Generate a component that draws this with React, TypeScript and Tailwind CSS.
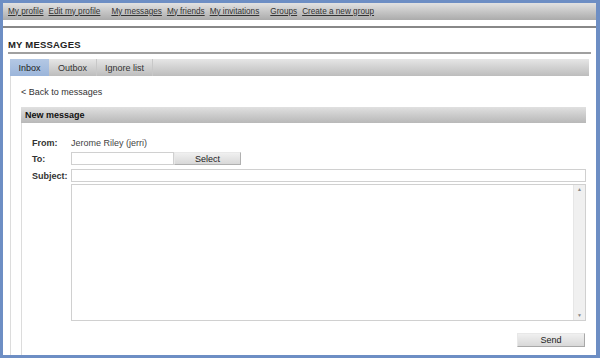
import React from "react";

const navGroups = [
  ["My profile", "Edit my profile"],
  ["My messages", "My friends", "My invitations"],
  ["Groups", "Create a new group"],
];

const tabs = [
  { label: "Inbox", active: true, w: "w-[39px]" },
  { label: "Outbox", active: false, w: "w-[48px]" },
  { label: "Ignore list", active: false, w: "w-[56px]" },
];

function Field({ label, children }: { label: string; children: React.ReactNode }) {
  return (
    <div className="flex h-[13px] items-center">
      <div className="w-[39px] shrink-0 font-bold text-[#333]">{label}</div>
      {children}
    </div>
  );
}

export default function App() {
  return (
    <div
      className="w-[600px] h-[358px] bg-[#6d8ec4] pt-[3px] pl-[3px] pr-[4px] pb-[3px] text-[9px] leading-[12px] text-[#333]"
      style={{ fontFamily: "'Liberation Sans', Arial, sans-serif" }}
    >
      <div className="flex h-full flex-col bg-white">
        {/* top nav */}
        <div className="flex h-[17px] items-center gap-[11px] bg-gradient-to-b from-[#e2e2e2] to-[#ababab] pl-[5px] text-[8.2px]">
          {navGroups.map((g, i) => (
            <div key={i} className="flex gap-[5px]">
              {g.map((l) => (
                <a key={l} className="underline text-[#333] cursor-pointer">{l}</a>
              ))}
            </div>
          ))}
        </div>
        <div className="h-[8px] border-b-2 border-[#888]" />

        {/* heading */}
        <div className="px-[5px] pt-[11px]">
          <div className="border-b-2 border-[#a0a0a0] pb-[1px] text-[9.5px] font-bold tracking-[0.2px] text-[#222]">
            MY MESSAGES
          </div>
        </div>

        {/* tabs */}
        <div className="mx-[7px] mt-[5px] flex h-[17px] bg-gradient-to-b from-[#e6e6e6] to-[#bdbdbd]">
          {tabs.map((t) => (
            <div
              key={t.label}
              className={
                t.active
                  ? `${t.w} flex items-center justify-center bg-gradient-to-b from-[#b4c8e4] to-[#9bb5da] text-[#222]`
                  : `${t.w} flex items-center justify-center border-r border-[#c8c8c8] text-[#333]`
              }
            >
              {t.label}
            </div>
          ))}
        </div>

        {/* content */}
        <div className="mx-[7px] flex flex-1 flex-col border-l border-[#dcdcdc] pl-[10px] pr-[3px]">
          <div className="pt-[10px] pb-[9px]">&lt; Back to messages</div>
          <div className="flex h-[16px] items-center bg-gradient-to-b from-[#e0e0e0] to-[#b8b8b8] pl-[4px] font-bold text-[#111]">
            New message
          </div>
          <div className="flex flex-1 flex-col border-l border-[#dcdcdc] pl-[10px] pt-[13px]">
            <Field label="From:">
              <div className="text-[#444]">Jerome Riley (jerri)</div>
            </Field>
            <div className="mt-[3px]">
              <Field label="To:">
                <div className="h-[13px] w-[103px] border border-[#d0d0d0] bg-white" />
                <div className="flex h-[13px] w-[67px] items-center justify-center border border-[#b0b0b0] border-t-[#e8e8e8] border-l-[#e8e8e8] bg-gradient-to-b from-[#f0f0f0] to-[#d8d8d8] text-[#222]">
                  Select
                </div>
              </Field>
            </div>
            <div className="mt-[4px]">
              <Field label="Subject:">
                <div className="h-[13px] flex-1 border border-[#d0d0d0] bg-white" />
              </Field>
            </div>
            <div className="mt-[2px] flex">
              <div className="w-[39px] shrink-0" />
              <div className="flex h-[137px] flex-1 border border-[#d0d0d0] bg-white">
                <div className="flex-1" />
                <div className="flex w-[12px] flex-col justify-between border-l border-[#e6e6e6] bg-[#f0f0f0] py-[2px] text-[5px] text-[#888]">
                  <span className="text-center leading-none">▲</span>
                  <span className="text-center leading-none">▼</span>
                </div>
              </div>
            </div>
            <div className="mt-[12px] flex justify-end pr-[1px]">
              <div className="flex h-[14px] w-[68px] items-center justify-center border border-[#a8a8a8] border-t-[#e8e8e8] border-l-[#e8e8e8] bg-gradient-to-b from-[#f0f0f0] to-[#d8d8d8] text-[#222]">
                Send
              </div>
            </div>
          </div>
        </div>
      </div>
    </div>
  );
}
